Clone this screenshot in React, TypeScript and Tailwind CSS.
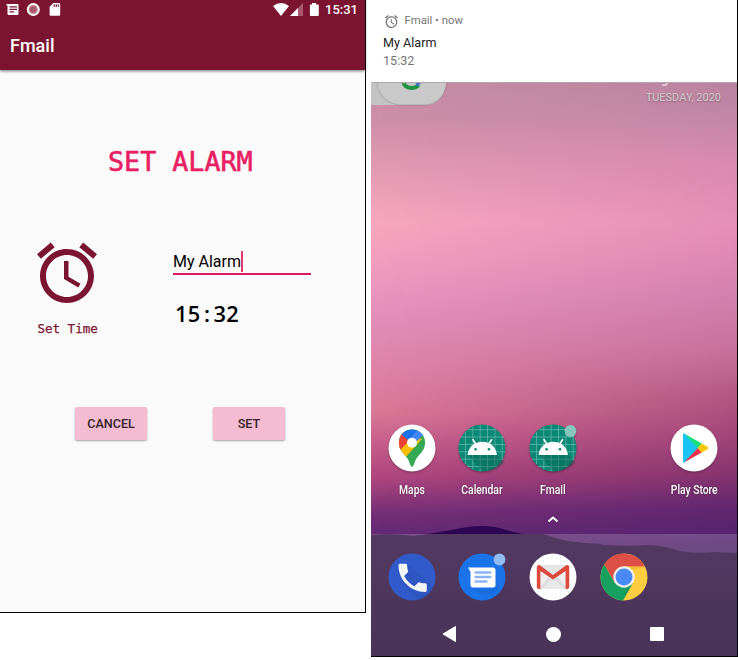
import type { ReactNode } from "react";

function AlarmIcon({ className }: { className: string }) {
  return (
    <svg viewBox="2 2 20 20" className={className} fill="currentColor">
      <path d="M22 5.720l-4.600-3.860-1.290 1.530 4.600 3.860L22 5.720zM7.880 3.390L6.600 1.860 2 5.710l1.290 1.530 4.590-3.850zM12.500 8H11v6l4.750 2.850.75-1.230-4-2.370V8zM12 4c-4.970 0-9 4.030-9 9s4.020 9 9 9a9 9 0 0 0 0-18zm0 16c-3.870 0-7-3.130-7-7s3.130-7 7-7 7 3.130 7 7-3.130 7-7 7z" />
    </svg>
  );
}

function StatusBar() {
  return (
    <div className="flex h-[19px] items-center justify-between pl-[5px] pr-2 text-white">
      <svg width="58" height="19" viewBox="0 0 58 19" fill="#fff">
        <path
          fillRule="evenodd"
          d="M1 4H12.500Q13.500 4 13.500 5V14Q13.500 15 12.500 15H3.500Q2.500 15 2.500 14V6ZM4.500 6.300V7.500H12V6.300ZM4.500 8.800V10H12V8.800ZM4.500 11.300V12.500H9V11.300Z"
        />
        <circle cx="28.300" cy="9.500" r="6.500" />
        <circle cx="28.300" cy="9.500" r="4.500" fill="#bb7b8b" />
        <circle cx="28.300" cy="9.500" r="3.100" fill="#a9586d" />
        <path
          fillRule="evenodd"
          d="M48.400 3H54Q55.200 3 55.200 4.200V14.500Q55.200 15.700 54 15.700H45.700Q44.600 15.700 44.600 14.500V6.800ZM48.700 4.300V7H49.800V4.300ZM50.700 4.300V7H51.800V4.300ZM52.700 4.300V7H53.800V4.300Z"
        />
      </svg>
      <div className="flex items-center">
        <svg width="52" height="19" viewBox="0 0 52 19" fill="#fff">
          <path d="M0 6Q8 0 16 6L8 16Z" />
          <path d="M30 3V16H17Z" fill="#a9586d" />
          <path d="M25 8V16H17Z" />
          <path d="M39 3h4v1.500h2q.8 0 .8.8v9.800q0 .8-.8.8h-7.300q-.8 0-.8-.8V5.300q0-.8.8-.8H39Z" />
        </svg>
        <span className="w-8 text-[13px] font-medium leading-[19px]">15:31</span>
      </div>
    </div>
  );
}

function RaisedButton({ children }: { children: ReactNode }) {
  return (
    <button className="h-[33px] w-[72px] rounded-[2px] bg-[#f5bbd0] text-[12.600px] font-medium leading-[33px] text-[#302329] shadow-[0_1px_2px_rgba(0,0,0,0.35)]">
      {children}
    </button>
  );
}

function AlarmScreen() {
  return (
    <section className="flex h-[613px] w-[366px] flex-col border-b border-r border-black bg-[#fafafa]">
      <header className="h-[70px] shrink-0 bg-[#7b1430] shadow-[0_1px_3px_rgba(0,0,0,0.55)]">
        <StatusBar />
        <h1 className="pl-[10px] text-[18px] font-medium leading-[54px] text-white">Fmail</h1>
      </header>
      <h2 className="mt-[76px] pl-[108px] font-['DejaVu_Sans_Mono',monospace] text-[26.700px] leading-8 text-[#e91e63] [-webkit-text-stroke:0.600px_#e91e63]">
        SET ALARM
      </h2>
      <div className="mt-[65px] flex h-[96px] pl-[37px]">
        <div className="w-[136px]">
          <AlarmIcon className="h-[60px] w-[60px] overflow-visible text-[#7b1430]" />
          <p className="mt-[17px] pl-[0.500px] font-['DejaVu_Sans_Mono',monospace] text-[12.500px] leading-[18px] text-[#7b1430] [-webkit-text-stroke:0.250px_#7b1430]">
            Set Time
          </p>
        </div>
        <div className="w-[138px]">
          <div className="mt-px flex h-[31px] items-start border-b-2 border-[#d81b60] pt-[7px]">
            <span className="text-[16px] leading-[22px] text-black">My Alarm</span>
            <span className="h-[21px] w-[2px] bg-[#e0386f]" />
          </div>
          <p className="mt-[25px] pl-[2px] font-['Open_Sans',sans-serif] text-[21.800px] font-semibold leading-7 tracking-[0.350px] text-black">
            15<span className="inline-block w-[12.800px] text-center">:</span>32
          </p>
        </div>
      </div>
      <div className="mt-[68px] flex gap-[66px] pl-[75px]">
        <RaisedButton>CANCEL</RaisedButton>
        <RaisedButton>SET</RaisedButton>
      </div>
    </section>
  );
}

function AndroidAppIcon({ dot = false }: { dot?: boolean }) {
  return (
    <svg width="48" height="48" viewBox="0 0 48 48">
      <circle cx="24" cy="24" r="23.500" fill="#098875" />
      <path
        d="M7.500 8V40M14.800 2.500V45.500M22.200.700V47.300M29.500 1V47M36.900 4.500V43.500M44.200 12V36M10 5.700H38M3 13H45M.7 20.500H47.300M.7 27.800H47.300M3 35.200H45M9 42.500H39"
        stroke="#62b5a8"
        strokeWidth=".8"
      />
      <path d="M10 31H39L46.500 38Q37 48 25 47.300Z" fill="#075e51" opacity=".4" />
      <path d="M9.500 31Q10.200 23.600 16.500 19.800L14 15.600L15.400 14.800L18.200 19Q24.300 16.500 30.400 19L33.200 14.800L34.600 15.600L32 19.800Q38.300 23.600 39 31Z" fill="#fff" />
      <circle cx="17.600" cy="25.200" r="1.300" fill="#098875" />
      <circle cx="31" cy="25.200" r="1.300" fill="#098875" />
      {dot && <circle cx="41.500" cy="7" r="5.900" fill="#87c6bd" />}
    </svg>
  );
}

function MapsIcon() {
  return (
    <svg width="48" height="48" viewBox="0 0 48 48">
      <defs>
        <clipPath id="pin">
          <path d="M24 5.500C16 5.500 10.900 11.500 10.900 18.500C10.900 26 15.500 29 19.200 34C21.500 37 22 42.500 24 43C26 42.500 26.500 37 28.800 34C32.500 29 37.100 26 37.100 18.500C37.100 11.500 32 5.500 24 5.500Z" />
        </clipPath>
      </defs>
      <circle cx="24" cy="24" r="23.500" fill="#fff" />
      <g clipPath="url(#pin)">
        <path d="M0 0H48V48H0Z" fill="#34a853" />
        <path d="M8 22L20 12L34 15L16 35L8 32Z" fill="#fbbc04" />
        <path d="M0 6H14L22 16L9 29L0 26Z" fill="#ea4335" />
        <path d="M13 10L21 17L35 0H13Z" fill="#1a73e8" />
        <path d="M20 17L32 3L44 8L35.500 10.500L26 20Z" fill="#4285f4" />
      </g>
      <circle cx="24" cy="18.700" r="5" fill="#fff" />
    </svg>
  );
}

function PlayIcon() {
  return (
    <svg width="48" height="48" viewBox="0 0 48 48">
      <circle cx="24" cy="24" r="23.500" fill="#fff" />
      <path d="M13 10.500Q13 9 14.500 9.500L28.500 24L14.500 38.500Q13 39 13 37.500Z" fill="#16c5f4" />
      <path d="M14 9.500L31.800 19.500L27.800 24Z" fill="#15df76" />
      <path d="M14 38.500L31.800 28.500L27.800 24Z" fill="#ee3348" />
      <path d="M31.800 19.500L38 23Q39.300 24 38 25L31.800 28.500L27.800 24Z" fill="#ffc800" />
    </svg>
  );
}

function PhoneIcon() {
  return (
    <svg width="48" height="48" viewBox="0 0 48 48">
      <circle cx="24" cy="24" r="23.500" fill="#315bcb" />
      <path d="M19 11L46 32Q42 44 30 47L14 31Z" fill="#2850b5" opacity=".4" />
      <path
        transform="translate(5.800 6) scale(1.570)"
        d="M6.620 10.790c1.440 2.830 3.760 5.140 6.590 6.590l2.200-2.200c.27-.27.67-.36 1.020-.24 1.120.37 2.330.57 3.570.57.55 0 1 .45 1 1V20c0 .55-.45 1-1 1-9.390 0-17-7.610-17-17 0-.55.45-1 1-1h3.500c.55 0 1 .45 1 1 0 1.250.2 2.450.57 3.570.11.35.03.74-.25 1.020l-2.200 2.200z"
        fill="#f3f4f6"
      />
    </svg>
  );
}

function MessagesIcon() {
  return (
    <svg width="48" height="48" viewBox="0 0 48 48">
      <circle cx="24" cy="24" r="23.500" fill="#1a73e8" />
      <path d="M12 34L17 36H35L37.500 34V18L40 37Q31 43 22 41Z" fill="#1662cb" opacity=".4" />
      <path d="M10 14.500H35Q37.500 14.500 37.500 17V32Q37.500 34.500 35 34.500H15Q12.500 34.500 12.500 32V19Z" fill="#fff" />
      <path d="M17.500 19.500H32.500M17.500 24H32.500M17.500 28.500H28.500" stroke="#8ab4f8" strokeWidth="2.300" strokeLinecap="round" />
      <circle cx="41.500" cy="6.500" r="5.900" fill="#91bcf2" />
    </svg>
  );
}

function GmailIcon() {
  return (
    <svg width="48" height="48" viewBox="0 0 48 48">
      <circle cx="24" cy="24" r="23.500" fill="#fff" />
      <path d="M10 12H38V36H10Z" fill="#eee" />
      <path d="M10 36L20 23L24 27L28 23L38 36Z" fill="#dedede" />
      <path d="M12 36L24 26L36 36Z" fill="#e9e9e9" />
      <path d="M10 12L24 22L38 12Z" fill="#e6e6e6" />
      <path d="M7.800 14Q8 11.500 10.500 12L24 22L37.500 12Q40 11.500 40.200 14V34Q40.200 36 38.200 36H36.600V18L24 26.500L11.400 18V36H9.800Q7.800 36 7.800 34Z" fill="#dc4a3d" />
    </svg>
  );
}

function ChromeIcon() {
  return (
    <svg width="48" height="48" viewBox="0 0 48 48">
      <circle cx="24" cy="24" r="23.500" fill="#ffcd40" />
      <path d="M4.200 11.500A23.500 23.500 0 0 1 45 13.500H24L14.500 29.500Z" fill="#de5045" />
      <path d="M4.200 11.500A23.500 23.500 0 0 0 23 47.500L33.100 29.500H14.500Z" fill="#17a160" />
      <path d="M24 13.500H45L34 17Z" fill="#e5b534" opacity=".7" />
      <path d="M33 29L23 47.500L28 34Z" fill="#11834e" opacity=".5" />
      <circle cx="24" cy="24" r="10.700" fill="#f1f1f1" />
      <circle cx="24" cy="24" r="8.500" fill="#4a8af4" />
    </svg>
  );
}

function Launcher({ label, children }: { label: string; children: ReactNode }) {
  return (
    <div className="flex w-[70.700px] flex-col items-center">
      <div className="h-12 w-12 rounded-full drop-shadow-[0_1px_1px_rgba(0,0,0,0.3)]">{children}</div>
      <span className="mt-[9.500px] scale-x-[0.860] whitespace-nowrap text-[12px] font-medium leading-4 text-white [text-shadow:0_0_2px_rgba(0,0,0,0.5)]">
        {label}
      </span>
    </div>
  );
}

function Wallpaper() {
  return (
    <div className="absolute inset-0">
      <div className="absolute inset-0 bg-[linear-gradient(to_bottom,#c78da6_0px,#cd8fa6_35px,#dd98af_75px,#f6a7be_138px,#f49fbd_170px,#ea96bf_205px,#e18db7_242px,#e184a8_280px,#d97896_330px,#c75f8c_360px,#b0467e_395px,#762f78_430px,#652a76_450px,#4f2468_480px)]" />
      <div className="absolute inset-0 bg-[linear-gradient(to_bottom,#bb83a0_0px,#c386a7_35px,#d989af_80px,#e68eb7_140px,#df87b3_175px,#d080ad_215px,#c8709b_265px,#b0547f_320px,#a4457b_350px,#87346f_390px,#61276f_425px,#54236e_455px,#42205b_480px)] [mask-image:linear-gradient(to_right,transparent,black)]" />
      <svg className="absolute inset-0" width="366" height="574" viewBox="0 83 366 574">
        <path d="M0 539L45 536Q75 531 91 528Q116 523 135 530Q158 536 188 542L230 544V657H0Z" fill="#2d0651" />
        <path d="M0 534H366V657H0Z" fill="#fff" opacity=".18" />
        <defs>
          <linearGradient id="ground" x1="0" y1="0" x2="0" y2="1">
            <stop offset="0" stopColor="#533962" />
            <stop offset=".6" stopColor="#4c355b" />
            <stop offset="1" stopColor="#493358" />
          </linearGradient>
        </defs>
        <path d="M0 535Q20 533 42 536L61 534H172Q190 541 213 543Q247 547 275 545Q291 545 305 550Q318 554 344 552L366 553V657H0Z" fill="url(#ground)" />
      </svg>
    </div>
  );
}

function HomeScreen() {
  return (
    <section className="flex h-[657px] w-[367px] flex-col border-b border-r border-black bg-white">
      <div className="h-[82px] shrink-0 pl-3 pt-[13px]">
        <div className="flex h-4 items-center text-[11.300px] leading-4 text-[#757575]">
          <AlarmIcon className="ml-[2px] mr-[6.500px] h-[13px] w-[13px] overflow-visible" />
          Fmail • now
        </div>
        <p className="mt-[5px] text-[12.600px] leading-[18px] text-[#212121]">My Alarm</p>
        <p className="text-[12.600px] leading-[17px] text-[#757575]">15:32</p>
      </div>
      <div className="relative flex h-[574px] flex-col overflow-hidden border-t border-[#b3a5ae]">
        <Wallpaper />
        <div className="relative flex h-[340px] items-start justify-between">
          <svg width="80" height="26" viewBox="0 82.500 80 26">
            <path d="M0 81H75V83Q72 104.500 54 104.500H0Z" fill="#c4c4c4" />
            <path d="M6 81Q9 102 29 104H54Q73 102 75.500 81Z" fill="#c9c9c9" className="drop-shadow-[0_0_1px_rgba(0,0,0,0.3)]" />
            <path d="M32.500 82Q34 87.500 41 87.500Q45 87.500 47.500 84.500" fill="none" stroke="#1f933f" strokeWidth="4" />
            <path d="M46.500 86L50.500 82H46L44.500 83.500Z" fill="#3971d9" />
            <path d="M31 82H35L33 83Z" fill="#e5a50a" />
          </svg>
          <div className="flex flex-col items-end pr-[16px] text-[#d1cbd0] [text-shadow:0_1px_2px_rgba(0,0,0,0.3)]">
            <svg width="60" height="7" viewBox="0 0 60 7">
              <path d="M6 0Q5.500 3 1 2" fill="none" stroke="#e0d9df" strokeWidth="1.600" />
            </svg>
            <span className="text-[11px] leading-4">TUESDAY, 2020</span>
          </div>
        </div>
        <div className="relative flex h-[89px] pl-[5.200px] pt-px">
          <Launcher label="Maps"><MapsIcon /></Launcher>
          <Launcher label="Calendar"><AndroidAppIcon /></Launcher>
          <Launcher label="Fmail"><AndroidAppIcon dot /></Launcher>
          <div className="w-[70.700px]" />
          <Launcher label="Play Store"><PlayIcon /></Launcher>
        </div>
        <svg className="relative -mt-[2px] ml-[176px]" width="12" height="16" viewBox="0 0 12 16">
          <path d="M1.500 11.500L6 7.500L10.500 11.500" fill="none" stroke="#fff" strokeWidth="2" />
        </svg>
        <div className="relative mt-[27px] flex h-12 gap-[22.700px] pl-[16.700px]">
          <PhoneIcon />
          <MessagesIcon />
          <GmailIcon />
          <ChromeIcon />
        </div>
        <div className="relative mt-[25px] flex items-center justify-between pl-[71px] pr-[73px]">
          <svg width="15" height="16" viewBox="0 0 15 16"><path d="M1 8L13.500 .5V15.500Z" fill="#fff" stroke="#fff" strokeLinejoin="round" /></svg>
          <div className="h-[15px] w-[15px] rounded-full bg-white" />
          <div className="h-[14px] w-[14px] rounded-[1px] bg-white" />
        </div>
      </div>
    </section>
  );
}

export default function App() {
  return (
    <main className="flex h-[660px] w-[738px] items-start gap-[5px] overflow-hidden bg-white font-[Roboto,sans-serif]">
      <AlarmScreen />
      <HomeScreen />
    </main>
  );
}
